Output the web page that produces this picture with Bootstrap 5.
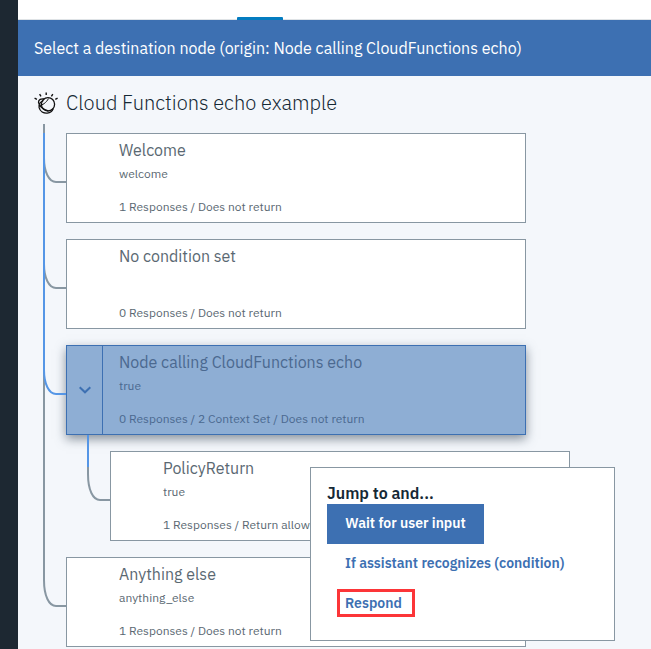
<!DOCTYPE html>
<html lang="en">
<head>
<meta charset="utf-8">
<meta name="viewport" content="width=device-width, initial-scale=1">
<title>Dialog nodes</title>
<link href="https://cdn.jsdelivr.net/npm/bootstrap@5.3.0/dist/css/bootstrap.min.css" rel="stylesheet">
<style>
body{font-family:"IBM Plex Sans",Roboto,"Liberation Sans",sans-serif;background:#f4f7fb;color:#5a6872;height:649px}
.rail{width:18px;background:#1d2832}
.tabs{height:20px;background:#fff;border-bottom:1px solid #dfe3e6;padding-left:219px}
.tab-mark{width:46px;height:3px;background:#047cc0;border-radius:1px 1px 0 0;margin-bottom:-1px}
.banner{height:56px;background:#3d70b2;font-size:16px;padding-left:16px}
.tree{padding:11px 0 0 16px}
.tree-title{height:33px;font-size:20px;font-weight:300;color:#152935;gap:8px;line-height:24px}
.tree-title span{margin-top:-1px}
.nodes{margin:13px 0 0 32px;gap:16px}
.node{width:460px;height:90px;background:#fff;border:1px solid #8897a2;padding:6px 0 0 52px}
.node.child{margin-left:44px}
.node h2{font-size:16px;line-height:20px;font-weight:400;margin:0}
.node p{font-size:12px;line-height:16px;margin:0}
.node .cond{height:16px;margin:6px 0 17px}
.node.picked{background:#8eaed4;border-color:#3d70b2;color:#4b6990;padding:0;box-shadow:0 4px 10px rgba(60,75,90,.6)}
.picked .toggle{width:36px;border-right:1px solid #3d70b2}
.picked .detail{padding:6px 0 0 16px}
.wires{left:0;top:0;pointer-events:none}
.jump{left:292px;top:391px;width:305px;height:174px;background:#fff;border:1px solid #8897a2;padding:15px 16px;z-index:3}
.jump h3{font-size:16px;line-height:21px;font-weight:600;color:#152935;margin:0}
.jump button{display:block;height:40px;border:0;background:none;padding:0 18px 2px;font-size:14px;font-weight:600;color:#3d70b2}
.jump .go{background:#3d70b2;color:#fff;width:157px}
.ring{left:26px;top:121px;width:78px;height:28px;border:3px solid #fc3538}
</style>
<script src="https://cdn.jsdelivr.net/npm/bootstrap@5.3.0/dist/js/bootstrap.bundle.min.js"></script>
</head>
<body class="d-flex overflow-hidden">
<aside class="rail flex-shrink-0"></aside>
<main class="flex-grow-1">
<div class="tabs d-flex align-items-end"><div class="tab-mark"></div></div>
<header class="banner d-flex align-items-center text-white">Select a destination node (origin: Node calling CloudFunctions echo)</header>
<section class="tree position-relative">
<div class="tree-title d-flex align-items-center">
<svg width="24" height="24" viewBox="0 0 24 24" fill="none" stroke="#111" stroke-width="1.3">
<ellipse cx="14" cy="12.300" rx="6.600" ry="6.700"/>
<path d="M10.500 7C7 6.200 4.400 7.800 4.500 10.300c.2 3.200 4 7 9.800 8.600M9.500 8.500c-3.500 1.600-5 4.400-4.400 7 1 3.800 4.400 6 8.200 5.600 3-.3 5-1.900 6-4.600"/>
<path stroke-width="1" d="M5.200 13.200c3.200.3 7-2.500 9.300-6.600"/>
<path stroke-width="1.400" d="M12.200.5v2.600M5.600 2.100l1.400 2.200M18.800 2.100l-1.400 2.200M.6 6.200l2.300 1.200M23.600 6.200l-2.300 1.200"/>
</svg>
<span>Cloud Functions echo example</span>
</div>
<svg class="wires position-absolute" width="120" height="573" viewBox="0 0 120 573" fill="none" stroke-width="2">
<g stroke="#8897a2">
<path d="M26 48V504C26 520 31 530 38 530H48"/>
<path d="M26 82C26 96 31 106 38 106H48"/>
<path d="M26 188C26 202 31 212 38 212H48"/>
<path d="M70 390V398C70 414 75 424 82 424H92"/>
</g>
<g stroke="#5596e6"><path d="M26 57V294C26 308 31 318 38 318H48"/><path d="M70 359V391"/></g>
</svg>
<div class="nodes d-flex flex-column">
<article class="node"><h2>Welcome</h2><p class="cond">welcome</p><p>1 Responses / Does not return</p></article>
<article class="node"><h2>No condition set</h2><p class="cond"></p><p>0 Responses / Does not return</p></article>
<article class="node picked d-flex">
<div class="toggle d-flex align-items-center justify-content-center"><svg width="12" height="8" viewBox="0 0 12 8" fill="none" stroke="#3d70b2" stroke-width="2"><path d="M.7 1.200L6 6.300l5.300-5.100"/></svg></div>
<div class="detail"><h2>Node calling CloudFunctions echo</h2><p class="cond">true</p><p>0 Responses / 2 Context Set / Does not return</p></div>
</article>
<article class="node child"><h2>PolicyReturn</h2><p class="cond">true</p><p>1 Responses / Return allowed</p></article>
<article class="node"><h2>Anything else</h2><p class="cond">anything_else</p><p>1 Responses / Does not return</p></article>
</div>
<div class="jump position-absolute">
<h3>Jump to and...</h3>
<button class="go text-nowrap">Wait for user input</button>
<button class="text-nowrap">If assistant recognizes (condition)</button>
<button>Respond</button>
<div class="ring position-absolute"></div>
</div>
</section>
</main>
</body>
</html>
